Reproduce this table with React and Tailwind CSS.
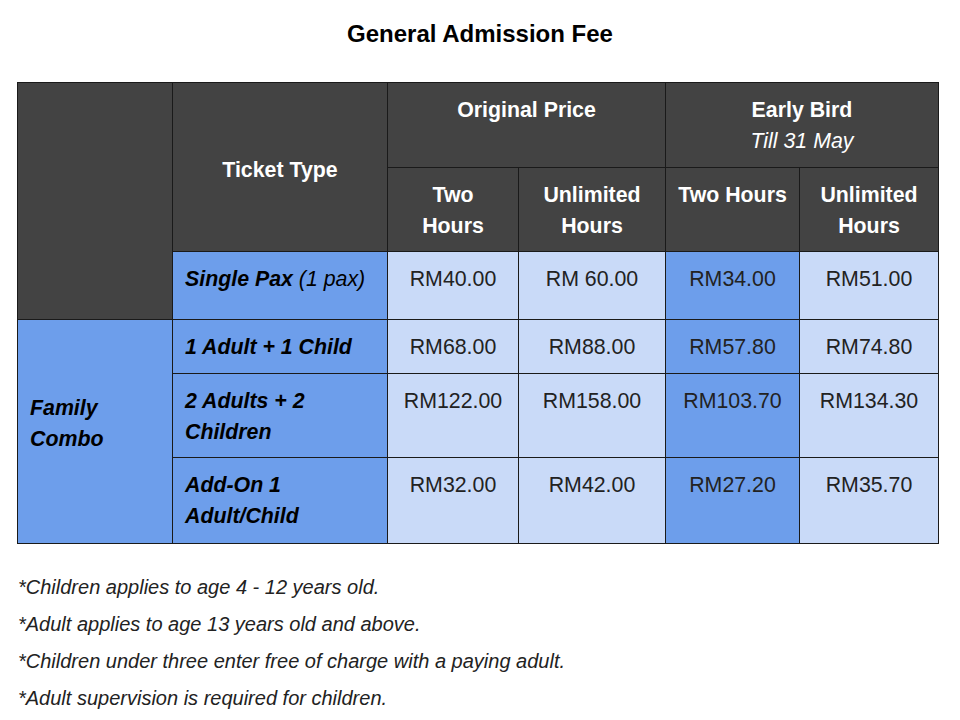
import React from 'react';

const dark = 'bg-[#434343] text-white font-bold';
const blue = 'bg-[#6d9eeb]';
const light = 'bg-[#c9daf8]';
const cell = 'border border-[#1a1a1a] align-top px-3 pt-3 leading-[31px]';

const rows = [
    { label: <b>1 Adult + 1 Child</b>, h: 'h-[54px]', prices: ['RM68.00', 'RM88.00', 'RM57.80', 'RM74.80'] },
    { label: <b>2 Adults + 2<br />Children</b>, h: 'h-[84px]', prices: ['RM122.00', 'RM158.00', 'RM103.70', 'RM134.30'] },
    { label: <b>Add-On 1<br />Adult/Child</b>, h: 'h-[86px]', prices: ['RM32.00', 'RM42.00', 'RM27.20', 'RM35.70'] },
];

const notes = [
    '*Children applies to age 4 - 12 years old.',
    '*Adult applies to age 13 years old and above.',
    '*Children under three enter free of charge with a paying adult.',
    '*Adult supervision is required for children.',
];

function PriceCells({ prices }) {
    return prices.map((p, i) => (
        <td key={i} className={`${cell} text-center text-[#222] ${i === 2 ? blue : light}`}>{p}</td>
    ));
}

export default function App() {
    return (
        <div className="w-[960px] h-[720px] bg-white text-black font-['Liberation_Sans',Arial,sans-serif]">
            <h1 className="pt-5 text-center text-[24px] leading-[28px] font-bold">General Admission Fee</h1>

            <table className="mt-[34px] ml-[17px] w-[921px] table-fixed border-collapse text-[21.33px]">
                <colgroup>
                    <col className="w-[155px]" />
                    <col className="w-[215px]" />
                    <col className="w-[131px]" />
                    <col className="w-[147px]" />
                    <col className="w-[134px]" />
                    <col className="w-[139px]" />
                </colgroup>
                <tbody>
                    <tr className="h-[85px]">
                        <td rowSpan={3} className={`${cell} ${dark}`}></td>
                        <td rowSpan={2} className={`${cell} ${dark} text-center !align-middle !pt-[6px]`}>Ticket Type</td>
                        <td colSpan={2} className={`${cell} ${dark} text-center`}>Original Price</td>
                        <td colSpan={2} className={`${cell} ${dark} text-center`}>
                            Early Bird
                            <div className="font-normal italic">Till 31 May</div>
                        </td>
                    </tr>
                    <tr className="h-[84px]">
                        <td className={`${cell} ${dark} text-center`}>Two<br />Hours</td>
                        <td className={`${cell} ${dark} text-center`}>Unlimited<br />Hours</td>
                        <td className={`${cell} ${dark} text-center !px-1`}>Two Hours</td>
                        <td className={`${cell} ${dark} text-center`}>Unlimited<br />Hours</td>
                    </tr>
                    <tr className="h-[68px]">
                        <td className={`${cell} ${blue} italic`}><b>Single Pax</b> (1 pax)</td>
                        <PriceCells prices={['RM40.00', 'RM 60.00', 'RM34.00', 'RM51.00']} />
                    </tr>
                    {rows.map((r, i) => (
                        <tr key={i} className={r.h}>
                            {i === 0 && (
                                <td rowSpan={3} className={`${cell} ${blue} !align-middle !pt-0 !pb-4 italic font-bold`}>
                                    Family<br />Combo
                                </td>
                            )}
                            <td className={`${cell} ${blue} italic whitespace-nowrap`}>{r.label}</td>
                            <PriceCells prices={r.prices} />
                        </tr>
                    ))}
                </tbody>
            </table>

            <div className="mt-[25px] pl-[18px] text-[20px] leading-[37px] italic text-[#222]">
                {notes.map((n, i) => (
                    <p key={i}>{n}</p>
                ))}
            </div>
        </div>
    );
}
